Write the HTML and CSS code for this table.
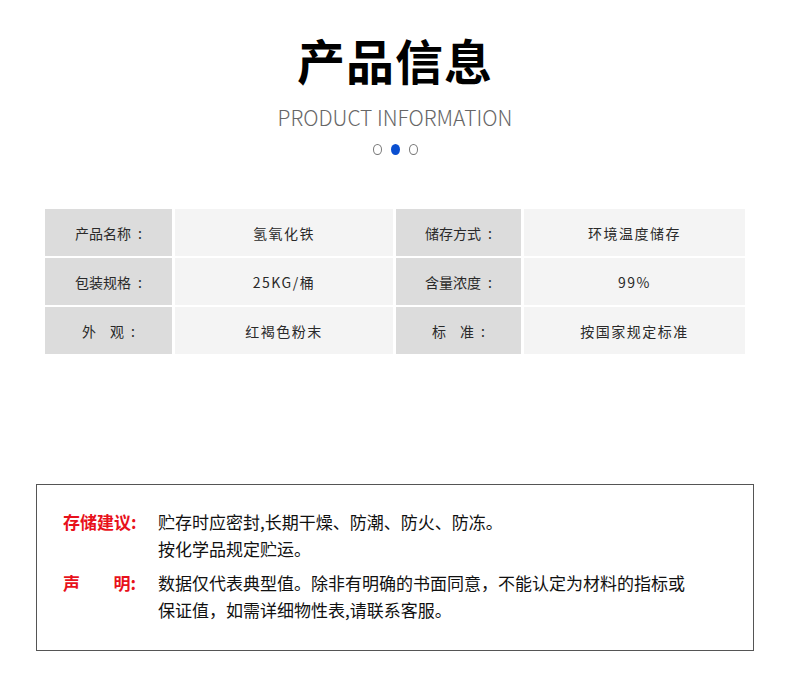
FILE: index.html
```html
<!DOCTYPE html>
<html lang="zh-CN">
<head>
    <meta charset="UTF-8">
    <meta name="viewport" content="width=device-width, initial-scale=1.0">
    <title>产品信息</title>
    <link rel="stylesheet" href="styles.css">
</head>
<body>
    <div class="heading">
        <h1>产品信息</h1>
        <p class="sub">PRODUCT INFORMATION</p>
        <div class="dots">
            <span class="dot"></span>
            <span class="dot active"></span>
            <span class="dot"></span>
        </div>
    </div>

    <div class="info-table">
        <div class="label">产品名称&ensp;:</div>
        <div class="value">氢氧化铁</div>
        <div class="label">储存方式&ensp;:</div>
        <div class="value">环境温度储存</div>

        <div class="label">包装规格&ensp;:</div>
        <div class="value">25KG/桶</div>
        <div class="label">含量浓度&ensp;:</div>
        <div class="value">99%</div>

        <div class="label">外&emsp;观&ensp;:</div>
        <div class="value">红褐色粉末</div>
        <div class="label">标&emsp;准&ensp;:</div>
        <div class="value">按国家规定标准</div>
    </div>

    <div class="notice">
        <div class="notice-row">
            <div class="notice-label">存储建议:</div>
            <div class="notice-text">贮存时应密封,长期干燥、防潮、防火、防冻。<br>按化学品规定贮运。</div>
        </div>
        <div class="notice-row">
            <div class="notice-label spread"><span>声</span><span>明:</span></div>
            <div class="notice-text">数据仅代表典型值。除非有明确的书面同意，不能认定为材料的指标或<br>保证值，如需详细物性表,请联系客服。</div>
        </div>
    </div>
</body>
</html>
```

FILE: styles.css
```css
body {
    margin: 0;
    background: #fff;
    font-family: "Noto Sans CJK SC", "Noto Sans", sans-serif;
    color: #222;
}

.heading {
    text-align: center;
    padding-top: 27px;
}

.heading h1 {
    margin: 0;
    font-size: 48px;
    line-height: 64px;
    font-weight: 700;
    color: #000;
    letter-spacing: 1px;
}

.heading .sub {
    margin: 13px 0 0;
    font-family: "Noto Sans CJK SC", sans-serif;
    font-weight: 300;
    font-size: 21px;
    line-height: 26px;
    color: #666;
}

.dots {
    display: flex;
    justify-content: center;
    gap: 9px;
    margin-top: 14px;
}

.dot {
    width: 7px;
    height: 9px;
    border: 1px solid #777;
    border-radius: 50%;
}

.dot.active {
    width: 9px;
    height: 11px;
    border: none;
    background: #0a4fd0;
}

.info-table {
    display: grid;
    grid-template-columns: 127px 218px 125px 221px;
    grid-auto-rows: 47px;
    gap: 2px 3px;
    width: 700px;
    margin: 54px 0 0 45px;
    font-size: 14px;
    color: #2a2a2a;
}

.info-table .label,
.info-table .value {
    display: flex;
    align-items: center;
    justify-content: center;
}

.info-table .label {
    background: #dcdcdc;
}

.info-table .value {
    background: #f4f4f4;
    letter-spacing: 1.5px;
}

.notice {
    width: 716px;
    margin: 130px 0 0 36px;
    border: 1px solid #555;
    padding: 23px 0 27px;
    font-size: 17px;
    line-height: 27px;
    color: #111;
}

.notice-row {
    display: flex;
}

.notice-row + .notice-row {
    margin-top: 7px;
}

.notice-label {
    width: 73px;
    margin-left: 26px;
    margin-right: 22px;
    font-weight: 700;
    color: #e8111b;
    white-space: nowrap;
}

.notice-label.spread {
    display: flex;
    justify-content: space-between;
}

.notice-text {
    flex: 1;
}
```
